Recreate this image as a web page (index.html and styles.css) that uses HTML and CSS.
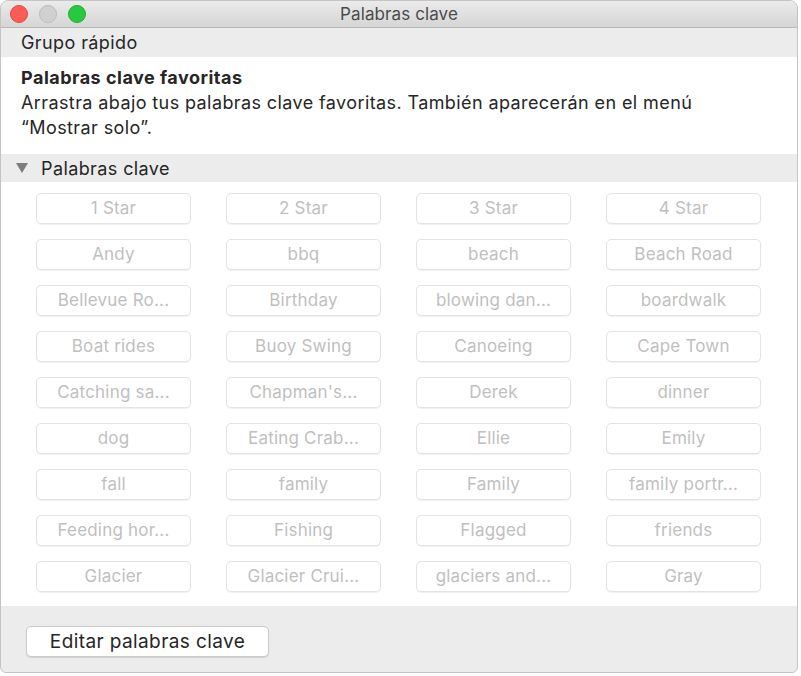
FILE: index.html
```html
<!DOCTYPE html>
<html lang="es">

<head>
    <meta charset="UTF-8">
    <meta name="viewport" content="width=device-width, initial-scale=1.0">
    <title>Palabras clave</title>
    <link rel="stylesheet" href="styles.css">
</head>

<body>

    <div class="window">
        <div class="titlebar">
            <div class="lights">
                <span class="light red"></span>
                <span class="light off"></span>
                <span class="light green"></span>
            </div>
            <div class="title">Palabras clave</div>
        </div>

        <div class="group">Grupo rápido</div>

        <section class="favs">
            <h2>Palabras clave favoritas</h2>
            <p>Arrastra abajo tus palabras clave favoritas. También aparecerán en el menú “Mostrar solo”.</p>
        </section>

        <div class="section-head">
            <svg class="tri" width="14" height="12" viewBox="0 0 14 12">
                <path d="M1 1 L13 1 L7 11 Z" fill="#7d7d7d"></path>
            </svg>
            <span>Palabras clave</span>
        </div>

        <div class="keywords">
            <div class="kw">1 Star</div>
            <div class="kw">2 Star</div>
            <div class="kw">3 Star</div>
            <div class="kw">4 Star</div>
            <div class="kw">Andy</div>
            <div class="kw">bbq</div>
            <div class="kw">beach</div>
            <div class="kw">Beach Road</div>
            <div class="kw">Bellevue Ro...</div>
            <div class="kw">Birthday</div>
            <div class="kw">blowing dan...</div>
            <div class="kw">boardwalk</div>
            <div class="kw">Boat rides</div>
            <div class="kw">Buoy Swing</div>
            <div class="kw">Canoeing</div>
            <div class="kw">Cape Town</div>
            <div class="kw">Catching sa...</div>
            <div class="kw">Chapman's...</div>
            <div class="kw">Derek</div>
            <div class="kw">dinner</div>
            <div class="kw">dog</div>
            <div class="kw">Eating Crab...</div>
            <div class="kw">Ellie</div>
            <div class="kw">Emily</div>
            <div class="kw">fall</div>
            <div class="kw">family</div>
            <div class="kw">Family</div>
            <div class="kw">family portr...</div>
            <div class="kw">Feeding hor...</div>
            <div class="kw">Fishing</div>
            <div class="kw">Flagged</div>
            <div class="kw">friends</div>
            <div class="kw">Glacier</div>
            <div class="kw">Glacier Crui...</div>
            <div class="kw">glaciers and...</div>
            <div class="kw">Gray</div>
        </div>

        <div class="bottom">
            <button class="edit">Editar palabras clave</button>
        </div>
    </div>

</body>

</html>
```

FILE: styles.css
```css
* {
    padding: 0;
    margin: 0;
    box-sizing: border-box;
}

body {
    background-color: #ffffff;
    font-family: Inter, "Noto Sans", sans-serif;
    font-size: 18px;
    letter-spacing: 0.4px;
    color: #262626;
}

.window {
    width: 798px;
    height: 673px;
    border: 1px solid #c4c4c4;
    border-radius: 8px 8px 6px 6px;
    overflow: hidden;
    display: flex;
    flex-direction: column;
    background-color: #ececec;
}

.titlebar {
    position: relative;
    height: 27px;
    background: linear-gradient(#ebebeb, #d5d5d5);
    border-bottom: 1px solid #b9b9b9;
    display: flex;
    align-items: center;
    justify-content: center;
}

.lights {
    position: absolute;
    left: 9px;
    top: 4px;
    display: flex;
    gap: 11px;
}

.light {
    width: 18px;
    height: 18px;
    border-radius: 50%;
}

.red {
    background-color: #fd5d57;
    border: 1px solid #e2463f;
}

.off {
    background-color: #d0d0d0;
    border: 1px solid #bcbcbc;
}

.green {
    background-color: #28c840;
    border: 1px solid #1eae2f;
}

.title {
    color: #4b4b4b;
    font-size: 17px;
    letter-spacing: 0.1px;
}

.group {
    height: 29px;
    line-height: 29px;
    padding-left: 20px;
    background-color: #ececec;
}

.favs {
    background-color: #ffffff;
    height: 97px;
    padding: 8px 20px 0 20px;
    line-height: 25px;
}

.favs h2 {
    font-size: 18px;
    font-weight: 700;
    letter-spacing: 0.5px;
}

.favs p {
    width: 700px;
}

.section-head {
    height: 28px;
    display: flex;
    align-items: center;
    padding-left: 14px;
    gap: 12px;
    background-color: #ececec;
}

.keywords {
    background-color: #ffffff;
    height: 424px;
    padding: 11px 0 0 35px;
    display: grid;
    grid-template-columns: repeat(4, 155px);
    grid-auto-rows: 31px;
    column-gap: 35px;
    row-gap: 15px;
}

.kw {
    border: 1px solid #e3e3e3;
    border-radius: 5px;
    box-shadow: 0 1px 1px rgba(0, 0, 0, 0.06);
    color: #bfbfbf;
    font-size: 17px;
    letter-spacing: 0.2px;
    text-align: center;
    line-height: 28px;
    white-space: nowrap;
}

.bottom {
    flex: 1;
    padding: 20px 0 0 25px;
}

.edit {
    width: 243px;
    height: 31px;
    background-color: #ffffff;
    border: 1px solid #cbcbcb;
    border-radius: 5px;
    box-shadow: 0 1px 1px rgba(0, 0, 0, 0.12);
    font-family: Inter, "Noto Sans", sans-serif;
    font-size: 19px;
    letter-spacing: 0.4px;
    color: #262626;
}
```
